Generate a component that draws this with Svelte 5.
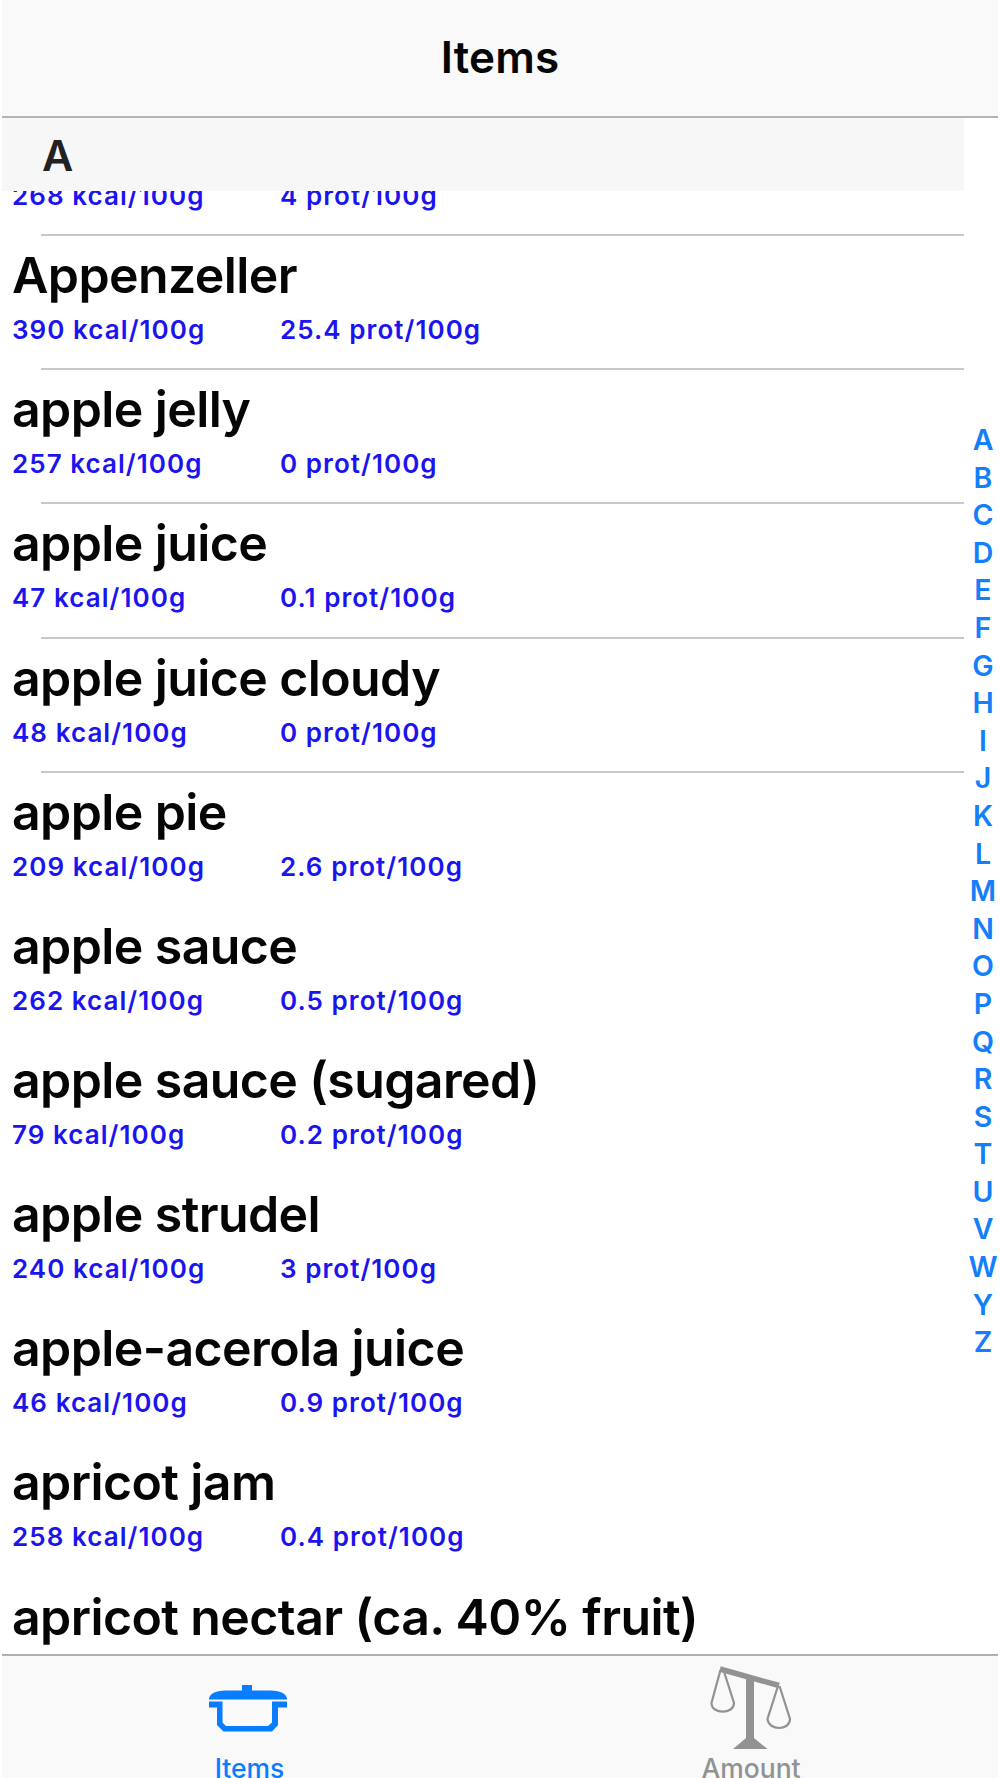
<script>
  // Food list grouped by first letter, with an A-Z index on the right
  // and a two-item tab bar at the bottom.
  const items = [
    // scrolled halfway under the section title, only its values show
    { name: '', kcal: '268', prot: '4', line: true },
    { name: 'Appenzeller', kcal: '390', prot: '25.4', line: true },
    { name: 'apple jelly', kcal: '257', prot: '0', line: true },
    { name: 'apple juice', kcal: '47', prot: '0.1', line: true },
    { name: 'apple juice cloudy', kcal: '48', prot: '0', line: true },
    { name: 'apple pie', kcal: '209', prot: '2.6' },
    { name: 'apple sauce', kcal: '262', prot: '0.5' },
    { name: 'apple sauce (sugared)', kcal: '79', prot: '0.2' },
    { name: 'apple strudel', kcal: '240', prot: '3' },
    { name: 'apple-acerola juice', kcal: '46', prot: '0.9' },
    { name: 'apricot jam', kcal: '258', prot: '0.4' },
    { name: 'apricot nectar (ca. 40% fruit)' },
  ];

  const letters = 'ABCDEFGHIJKLMNOPQRSTUVWYZ'.split('');

  let active = $state('items');
</script>

<div class="screen">
  <header class="navbar"><h1>Items</h1></header>

  <main class="content">
    <section class="table">
      <h2 class="section-title">A</h2>
      <div class="scroller">
        <ul class="rows">
          {#each items as item}
            <li class="row" class:line={item.line}>
              <div class="name">{item.name}</div>
              {#if item.kcal}
                <div class="meta">
                  <span class="kcal">{item.kcal} kcal/100g</span>
                  <span>{item.prot} prot/100g</span>
                </div>
              {/if}
            </li>
          {/each}
        </ul>
      </div>
    </section>

    <nav class="index" aria-label="Letters">
      {#each letters as letter}
        <span>{letter}</span>
      {/each}
    </nav>
  </main>

  <nav class="tabbar">
    <button
      type="button"
      class="items"
      class:active={active === 'items'}
      onclick={() => (active = 'items')}
    >
      <svg width="80" height="48" viewBox="0 0 80 48" fill="currentColor">
        <path d="M34 0H44V5.500H58C70 5.500 77 7 79 13V14.500H1V13C3 7 10 5.500 22 5.500H34Z" />
        <path d="M1 16.500H14.500V37.500L18 41H60L64 37.500V16.500H79V22.500H70V40L64 46.500H15.500L9 40V22.500H1Z" />
      </svg>
      <span class="label">Items</span>
    </button>
    <button
      type="button"
      class="amount"
      class:active={active === 'amount'}
      onclick={() => (active = 'amount')}
    >
      <svg width="84" height="86" viewBox="0 0 84 86" fill="none" stroke="currentColor">
        <path d="M11 3L70 19.5" stroke-width="5.5" />
        <path d="M37 10H45V72L58.5 83H24L37 72Z" fill="currentColor" stroke="none" />
        <path d="M11.5 4L2.5 37C2.5 48.500 25 48.500 25 37L14.5 4" stroke-width="2.2" />
        <path d="M69 20L58.500 53C59.500 65 81 65 81 53L70.500 20" stroke-width="2.2" />
      </svg>
      <span class="label">Amount</span>
    </button>
  </nav>
</div>

<style>
  :global(body) {
    margin: 0;
    background: #fff;
    overflow: hidden;
  }

  .screen {
    display: flex;
    flex-direction: column;
    box-sizing: border-box;
    height: 1778px;
    padding: 0 2px;
    overflow: hidden;
    font-family: Inter, 'Liberation Sans', sans-serif;
    font-weight: 600;
    color: #050505;
    white-space: nowrap;
  }

  .navbar {
    flex: none;
    box-sizing: border-box;
    height: 118px;
    display: flex;
    justify-content: center;
    padding-top: 29px;
    border-bottom: 2px solid #b4b4b5;
    background: #f9f9f9;
  }

  h1 {
    margin: 0;
    font-size: 44px;
    line-height: 56px;
    font-weight: 600;
    letter-spacing: 0.2px;
  }

  .content {
    flex: none;
    display: flex;
    height: 1536px;
  }

  .table {
    width: 962px;
    display: flex;
    flex-direction: column;
  }

  .section-title {
    flex: none;
    box-sizing: border-box;
    height: 73px;
    margin: 0;
    padding: 9px 0 0 40px;
    font-size: 43px;
    line-height: 56px;
    font-weight: 600;
    color: #222;
    background: #f7f7f7;
  }

  .scroller {
    flex: 1;
    min-height: 0;
    overflow: hidden;
  }

  .rows {
    list-style: none;
    margin: -89px 0 0;
    padding: 0 0 0 10px;
  }

  .row {
    box-sizing: border-box;
    height: 134.15px;
    padding-top: 8px;
  }

  /* separator is inset from the left, like the section title */
  .row.line {
    background: linear-gradient(#c8c7cc, #c8c7cc) 29px 100% / 100% 2px no-repeat;
  }

  .name {
    height: 62px;
    font-size: 50px;
    line-height: 62px;
    letter-spacing: -0.6px;
  }

  .meta {
    display: flex;
    margin-top: 7px;
    font-size: 26px;
    line-height: 34px;
    letter-spacing: 1.05px;
    color: #1c14ef;
  }

  .kcal {
    width: 268px;
  }

  .index {
    flex: 1;
    display: flex;
    flex-direction: column;
    align-items: center;
    padding: 303px 0 0 4px;
    font-size: 28.5px;
    line-height: 37.6px;
    color: #147efb;
  }

  .tabbar {
    flex: none;
    box-sizing: border-box;
    display: flex;
    height: 124px;
    border-top: 2px solid #b0b0b1;
    background: #f9f9f9;
  }

  .tabbar button {
    flex: 1;
    display: flex;
    flex-direction: column;
    align-items: center;
    justify-content: flex-start;
    padding: 0;
    border: 0;
    background: none;
    font: inherit;
    color: #929292;
  }

  .tabbar button.active {
    color: #087dff;
  }

  .tabbar svg {
    flex: none;
  }

  .items svg {
    margin: 29px 6px 0 0;
  }

  .amount svg {
    margin: 10px 0 0 4px;
  }

  .label {
    font-size: 26.5px;
    line-height: 34px;
    font-weight: 500;
  }

  .items .label {
    margin: 18px 3px 0 0;
  }

  .amount .label {
    margin: -1px 0 0 4px;
  }
</style>
